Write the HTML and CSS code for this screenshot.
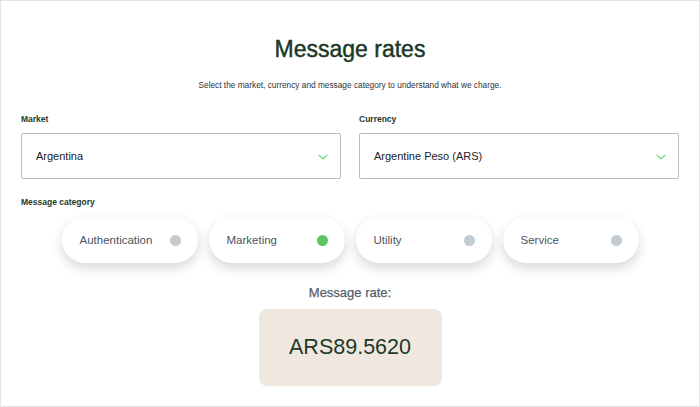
FILE: index.html
```html
<!DOCTYPE html>
<html lang="en">
<head>
<meta charset="utf-8">
<title>Message rates</title>
<link rel="stylesheet" href="styles.css">
</head>
<body>
<main class="page">
  <h1 class="title">Message rates</h1>
  <p class="intro">Select the market, currency and message category to understand what we charge.</p>

  <div class="fields">
    <div class="field">
      <label class="label">Market</label>
      <div class="select">
        <span>Argentina</span>
        <svg class="chevron" width="10" height="6" viewBox="0 0 10 6"><path d="M0.7 0.8 L5 5 L9.3 0.8" fill="none" stroke="#5fd36e" stroke-width="1.1"/></svg>
      </div>
    </div>
    <div class="field">
      <label class="label">Currency</label>
      <div class="select">
        <span>Argentine Peso (ARS)</span>
        <svg class="chevron" width="10" height="6" viewBox="0 0 10 6"><path d="M0.7 0.8 L5 5 L9.3 0.8" fill="none" stroke="#5fd36e" stroke-width="1.1"/></svg>
      </div>
    </div>
  </div>

  <div class="label category-label">Message category</div>
  <div class="pills">
    <div class="pill"><span>Authentication</span><i class="dot"></i></div>
    <div class="pill"><span>Marketing</span><i class="dot dot-on"></i></div>
    <div class="pill"><span>Utility</span><i class="dot"></i></div>
    <div class="pill"><span>Service</span><i class="dot"></i></div>
  </div>

  <div class="rate-label">Message rate:</div>
  <div class="rate-box">ARS89.5620</div>
</main>
</body>
</html>
```
FILE: styles.css
```css
* { box-sizing: border-box; }

html, body {
  margin: 0;
  padding: 0;
  background: #ffffff;
}

body {
  font-family: "Liberation Sans", Arial, sans-serif;
  color: #1c3a2c;
}

.page {
  width: 700px;
  height: 407px;
  border: 1px solid #e4e4e4;
  padding: 34px 20px 0;
  display: flex;
  flex-direction: column;
  align-items: center;
}

/* medium-weight headings: slight stroke on the regular face */
.title {
  margin: 0;
  font-size: 23px;
  line-height: 28px;
  font-weight: 400;
  color: #1a3828;
  -webkit-text-stroke: 0.45px #1a3828;
}

.intro {
  margin: 16px 0 0;
  font-size: 8.3px;
  line-height: 12px;
  color: #2e3338;
}

.fields {
  align-self: stretch;
  display: grid;
  grid-template-columns: 1fr 1fr;
  column-gap: 18px;
  margin-top: 22px;
}

.field {
  display: flex;
  flex-direction: column;
}

.label {
  font-size: 8.5px;
  line-height: 12px;
  font-weight: 700;
  color: #1b3a2a;
}

.select {
  margin-top: 8px;
  height: 46px;
  border: 1px solid #b6bbc2;
  border-radius: 2px;
  display: flex;
  align-items: center;
  justify-content: space-between;
  padding: 0 12px 0 14px;
  font-size: 11px;
  color: #1d2023;
}

.chevron { display: block; margin-top: 1px; }

.category-label {
  align-self: stretch;
  margin-top: 17px;
}

.pills {
  display: flex;
  gap: 11px;
  margin-top: 9px;
}

.pill {
  width: 136px;
  height: 46px;
  border-radius: 23px;
  background: #ffffff;
  box-shadow: 0 5px 12px rgba(0, 0, 0, 0.16);
  display: flex;
  align-items: center;
  justify-content: space-between;
  padding: 0 17px 0 18px;
  font-size: 11.5px;
  color: #4b5662;
}

.dot {
  width: 11px;
  height: 11px;
  border-radius: 50%;
  background: #c3ccd2;
}

.dot-on { background: #5ec565; }

.rate-label {
  margin-top: 22px;
  font-size: 13px;
  line-height: 16px;
  color: #55616c;
  -webkit-text-stroke: 0.25px #55616c;
}

.rate-box {
  margin-top: 8px;
  width: 183px;
  height: 77px;
  border-radius: 8px;
  background: #f0e7de;
  display: flex;
  align-items: center;
  justify-content: center;
  font-size: 21.5px;
  color: #1b3a2a;
}
```
